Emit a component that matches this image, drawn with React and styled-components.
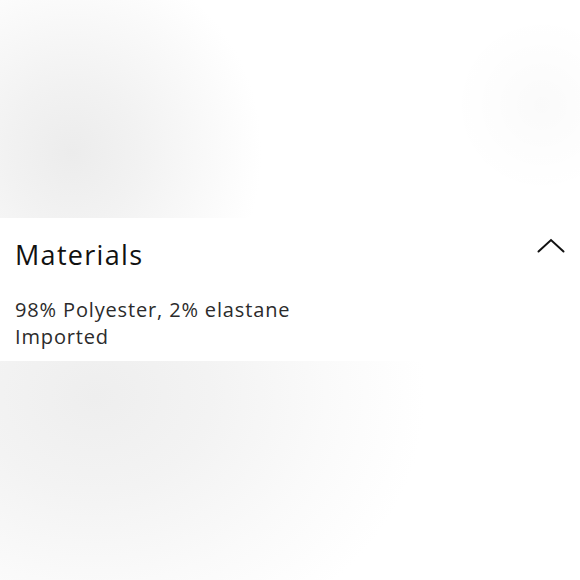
import React from "react";
import styled, { createGlobalStyle } from "styled-components";

const Global = createGlobalStyle`
  html, body { margin: 0; padding: 0; background: #ffffff; }
  body { font-family: "Open Sans", "Liberation Sans", sans-serif; }
`;

const Page = styled.div`
  width: 580px;
  height: 580px;
  display: flex;
  flex-direction: column;
  overflow: hidden;
`;

const Backdrop = styled.div`
  flex: ${(p) => (p.$fill ? "1" : `0 0 ${p.$h}px`)};
  background: ${(p) => p.$bg};
`;

const Panel = styled.section`
  background: #ffffff;
  padding: 20px 15px 11px 15px;
  display: flex;
  flex-direction: column;
`;

const Header = styled.div`
  display: flex;
  align-items: flex-start;
  justify-content: space-between;
`;

const Title = styled.h2`
  margin: 0;
  font-weight: 400;
  font-size: 27px;
  line-height: 34px;
  color: #111111;
  letter-spacing: 1.3px;
`;

const Chevron = styled.svg`
  width: 28px;
  height: 16px;
  margin-top: 0px;
  margin-right: 0px;
`;

const Body = styled.div`
  margin-top: 24px;
  font-size: 20px;
  line-height: 27px;
  color: #2b2b2b;
  letter-spacing: 0.85px;
`;

const topBg = `
  radial-gradient(circle at 542px 105px, rgba(0,0,0,0.018) 0px, rgba(0,0,0,0.008) 50px, rgba(0,0,0,0) 90px),
  radial-gradient(ellipse 190px 200px at 72px 152px, #ececec 0%, #f2f2f2 35%, #f9f9f9 70%, #ffffff 100%)
`;

const bottomBg = `
  radial-gradient(ellipse 330px 270px at 95px 35px, #eeeeee 0%, #f3f3f3 35%, #fafafa 70%, #ffffff 100%)
`;

export default function App() {
  return (
    <>
      <Global />
      <Page>
        <Backdrop $h={218} $bg={topBg} />
        <Panel>
          <Header>
            <Title>Materials</Title>
            <Chevron viewBox="0 0 28 16" fill="none">
              <path d="M1.5 13.5 L14 2 L26.5 13.5" stroke="#111" strokeWidth="2" strokeLinecap="round" strokeLinejoin="miter" />
            </Chevron>
          </Header>
          <Body>
            98% Polyester, 2% elastane
            <br />
            Imported
          </Body>
        </Panel>
        <Backdrop $fill $bg={bottomBg} />
      </Page>
    </>
  );
}
